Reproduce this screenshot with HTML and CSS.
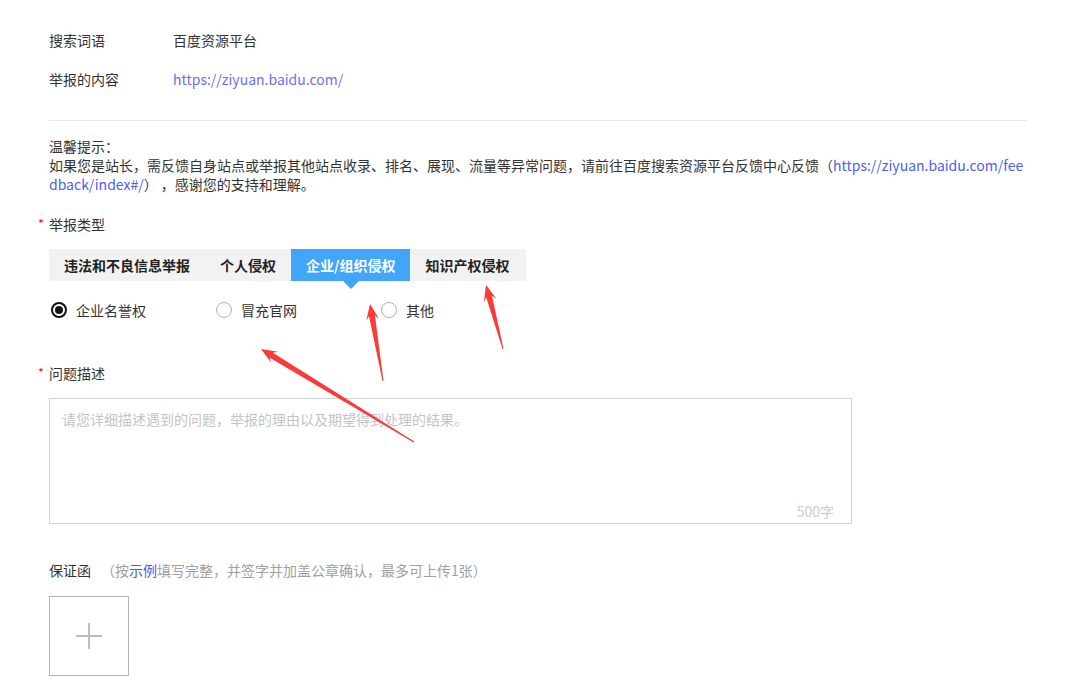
FILE: index.html
```html
<!DOCTYPE html>
<html lang="zh-CN">
<head>
<meta charset="utf-8">
<title>举报</title>
<link rel="stylesheet" href="styles.css">
</head>
<body>
<div class="page">
  <div class="info-row">
    <div class="info-label">搜索词语</div>
    <div class="info-value">百度资源平台</div>
  </div>
  <div class="info-row">
    <div class="info-label">举报的内容</div>
    <a class="info-link" href="#">https://ziyuan.baidu.com/</a>
  </div>

  <div class="divider"></div>

  <div class="tip">
    温馨提示：<br>
    如果您是站长，需反馈自身站点或举报其他站点收录、排名、展现、流量等异常问题，请前往百度搜索资源平台反馈中心反馈（<a class="tip-link" href="#">https://ziyuan.baidu.com/feedback/index#/</a>）&nbsp;，感谢您的支持和理解。
  </div>

  <div class="field-label req"><span class="star">*</span>举报类型</div>

  <div class="tabs">
    <div class="tab">违法和不良信息举报</div>
    <div class="tab">个人侵权</div>
    <div class="tab active">企业/组织侵权</div>
    <div class="tab">知识产权侵权</div>
  </div>

  <div class="radios">
    <label class="radio checked"><span class="dot"></span>企业名誉权</label>
    <label class="radio"><span class="dot"></span>冒充官网</label>
    <label class="radio"><span class="dot"></span>其他</label>
  </div>

  <div class="field-label req desc-label"><span class="star">*</span>问题描述</div>

  <div class="textarea-wrap">
    <textarea class="textarea" placeholder="请您详细描述遇到的问题，举报的理由以及期望得到处理的结果。"></textarea>
    <span class="counter">500字</span>
  </div>

  <div class="letter-row">
    <span class="letter-label">保证函</span>
    <span class="letter-hint">（按<a class="example" href="#">示例</a>填写完整，并签字并加盖公章确认，最多可上传1张）</span>
  </div>

  <div class="upload">
    <span class="plus-h"></span>
    <span class="plus-v"></span>
  </div>

  <svg class="annot" width="1082" height="685" viewBox="0 0 1082 685" xmlns="http://www.w3.org/2000/svg">
    <polygon fill="#fd3a3a" points="261,349 278.05,351.76 272.81,352.67 414.3,441.6 413.7,442.4 269.69,357.79 271.29,362.86"/>
    <polygon fill="#fd3a3a" points="370,304 379.07,318.70 374.96,315.33 383.5,380.9 382.5,381.1 369.04,316.33 366.25,320.86"/>
    <polygon fill="#fd3a3a" points="486,285 496.39,298.79 491.98,295.83 503.5,348.9 502.5,349.1 486.18,297.37 483.83,302.13"/>
  </svg>
</div>
</body>
</html>
```

FILE: styles.css
```css
html, body {
  margin: 0;
  padding: 0;
  background: #fff;
}

body {
  font-family: "Noto Sans CJK SC", "Liberation Sans", sans-serif;
  font-size: 14px;
  color: #333;
  line-height: 20px;
}

.page {
  position: relative;
  width: 978px;
  padding: 30px 55px 0 49px;
  height: 685px;
  box-sizing: content-box;
  overflow: hidden;
}

a {
  text-decoration: none;
}

.info-row {
  display: flex;
  height: 20px;
  margin-bottom: 19px;
}

.info-label {
  width: 124px;
}

.info-link {
  color: #6b6ff3;
}

.divider {
  height: 1px;
  background: #e6e6e6;
  margin-top: 31px;
}

.tip {
  margin-top: 16px;
  line-height: 19px;
  word-break: break-all;
}

.tip-link {
  color: #4e5ff0;
}

.field-label {
  margin-top: 20px;
  display: flex;
  align-items: center;
}

.field-label.req {
  margin-left: -11px;
}

.star {
  color: #f5222d;
  width: 11px;
  font-size: 13px;
}

.tabs {
  margin-top: 15px;
  display: flex;
  width: 477px;
  height: 32px;
  background: #f2f2f2;
}

.tab {
  position: relative;
  padding: 0 15px;
  line-height: 32px;
  font-weight: bold;
  color: #222;
}

.tab.active {
  background: #41a5fa;
  color: #fff;
}

.tab.active::after {
  content: "";
  position: absolute;
  left: 50%;
  bottom: -8px;
  margin-left: -8px;
  border-left: 8px solid transparent;
  border-right: 8px solid transparent;
  border-top: 8px solid #41a5fa;
}

.radios {
  display: flex;
  margin-top: 19px;
  height: 20px;
}

.radio {
  width: 165px;
  display: flex;
  align-items: center;
  color: #333;
}

.radio .dot {
  width: 16px;
  height: 16px;
  box-sizing: border-box;
  border: 1.5px solid #b0b0b0;
  border-radius: 50%;
  margin: 0 9px 0 2px;
  position: relative;
}

.radio.checked .dot {
  border: 2px solid #111;
}

.radio.checked .dot::after {
  content: "";
  position: absolute;
  left: 2px;
  top: 2px;
  width: 8px;
  height: 8px;
  border-radius: 50%;
  background: #111;
}

.desc-label {
  margin-top: 43px;
}

.textarea-wrap {
  position: relative;
  margin-top: 15px;
  width: 803px;
  height: 126px;
}

.textarea {
  display: block;
  width: 803px;
  height: 126px;
  box-sizing: border-box;
  border: 1px solid #d2d2d2;
  padding: 10px 12px;
  margin: 0;
  font-family: "Noto Sans CJK SC", "Liberation Sans", sans-serif;
  font-size: 14px;
  line-height: 20px;
  color: #333;
  resize: none;
  outline: none;
}

.textarea::placeholder {
  color: #c4c4c4;
}

.counter {
  position: absolute;
  right: 18px;
  bottom: 3px;
  color: #cccccc;
  line-height: 20px;
}

.letter-row {
  margin-top: 36px;
  display: flex;
  height: 20px;
}

.letter-label {
  color: #333;
}

.letter-hint {
  margin-left: 10px;
  color: #a0a0a0;
}

.example {
  color: #3d5bf5;
}

.upload {
  margin-top: 16px;
  width: 80px;
  height: 80px;
  box-sizing: border-box;
  border: 1px solid #b5b5b5;
  display: grid;
  place-items: center;
}

.plus-h,
.plus-v {
  grid-area: 1 / 1;
  background: #bdbdbd;
}

.plus-h {
  width: 26px;
  height: 1.5px;
}

.plus-v {
  width: 1.5px;
  height: 26px;
}

.annot {
  position: absolute;
  left: 0;
  top: 0;
  pointer-events: none;
}
```
